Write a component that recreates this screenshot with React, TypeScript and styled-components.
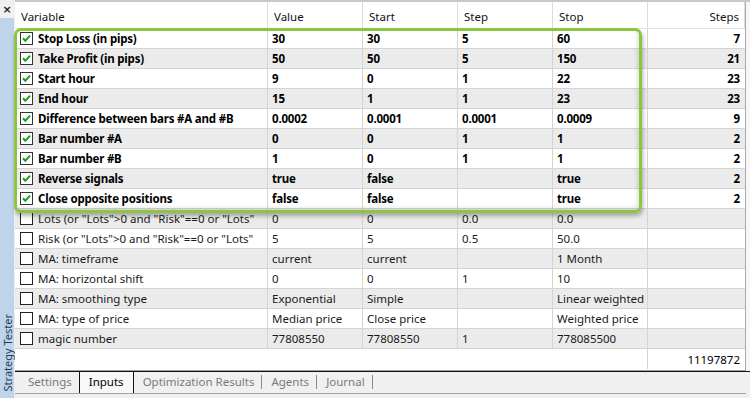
import React from "react";
import styled, { createGlobalStyle } from "styled-components";

const Global = createGlobalStyle`
  html, body { margin: 0; padding: 0; width: 750px; height: 398px; overflow: hidden; background: #f0f0f0; }
  #root { width: 750px; height: 398px; }
  * { box-sizing: border-box; }
`;

const FONT = `"Noto Sans", "Open Sans", "Liberation Sans", sans-serif`;

const Frame = styled.div`
  display: flex;
  width: 750px;
  height: 398px;
  font-family: ${FONT};
  font-size: 11.5px;
  color: #000;
`;

const Sidebar = styled.div`
  width: 15px;
  display: flex;
  flex-direction: column;
  background: #f0f0f0;
`;

const CloseBox = styled.div`
  height: 18px;
  display: flex;
  align-items: center;
  justify-content: center;
  font-family: "DejaVu Sans", sans-serif;
  font-size: 11px;
  font-weight: bold;
  color: #222;
  padding-right: 1px;
`;

const BlueStrip = styled.div`
  flex: 1;
  width: 14px;
  background: #bfd3ea;
  display: flex;
  align-items: flex-end;
  justify-content: center;
  padding-bottom: 7px;
`;

const VerticalLabel = styled.span`
  writing-mode: vertical-rl;
  transform: rotate(180deg);
  font-size: 11px;
  line-height: 13px;
  color: #1e3a5c;
  white-space: nowrap;
`;

const Main = styled.div`
  flex: 1;
  display: flex;
  flex-direction: column;
  border-top: 2px solid #c8c8c8;
  background: #f7f7f7;
  padding-right: 4px;
`;

const TablePane = styled.div`
  position: relative;
  flex: 1;
  background: #fff;
  border-right: 1px solid #a8a8a8;
  border-bottom: 1px solid #a0a0a0;
  display: grid;
  grid-template-columns: 253px 95px 95px 95px 95px 1fr;
  grid-auto-rows: 20px;
  grid-template-rows: 27px;
  align-content: start;
`;

const HeadCell = styled.div<{ $right?: boolean }>`
  display: flex;
  align-items: center;
  justify-content: ${(p) => (p.$right ? "flex-end" : "flex-start")};
  padding: 2px 5px 0 ${(p) => (p.$right ? "0" : "6px")};
  border-right: 1px solid #dcdcdc;
  border-bottom: 1px solid #e4e4e4;
  color: #111;
  white-space: nowrap;
`;

const Cell = styled.div<{ $alt: boolean; $bold: boolean; $right?: boolean; $last?: boolean }>`
  display: flex;
  align-items: center;
  justify-content: ${(p) => (p.$right ? "flex-end" : "flex-start")};
  gap: 5px;
  min-width: 0;
  padding: 0 ${(p) => (p.$right ? "5px" : "4px")} 0 ${(p) => (p.$right ? "0" : "4px")};
  background: ${(p) => (p.$alt ? "#ebebeb" : "#fff")};
  border-right: ${(p) => (p.$last ? "none" : "1px solid #d4d4d4")};
  border-bottom: 1px solid #d4d4d4;
  font-weight: ${(p) => (p.$bold ? 700 : 400)};
  letter-spacing: ${(p) => (p.$bold ? "-0.2px" : "0")};
  color: ${(p) => (p.$bold ? "#000" : "#1a1a1a")};
  white-space: nowrap;
  overflow: hidden;
`;

const NameCell = styled(Cell)`
  padding-left: 5px;
  padding-right: 0;
`;

const NameText = styled.span`
  flex: 1;
  min-width: 0;
  overflow: hidden;
  white-space: nowrap;
`;

const TotalFiller = styled.div`
  grid-column: 1 / 6;
  border-right: 1px solid #d4d4d4;
  background: #fff;
`;

const TotalCell = styled.div`
  display: flex;
  align-items: center;
  justify-content: flex-end;
  padding-right: 5px;
  background: #fff;
`;

const Highlight = styled.div`
  position: absolute;
  left: -1px;
  top: 26px;
  width: 628px;
  height: 185px;
  border: 3px solid #8cc63f;
  border-radius: 7px;
  box-shadow: 1px 3px 4px rgba(0, 0, 0, 0.3), inset -2px -2px 4px rgba(0, 0, 0, 0.12);
  pointer-events: none;
`;

const TabBar = styled.div`
  height: 27px;
  display: flex;
  align-items: stretch;
  border-top: 1px solid #111;
  padding-bottom: 4px;
  background: #f0f0f0;
  margin-right: -4px;
`;

const TabStrip = styled.div`
  flex: 1;
  display: flex;
  align-items: stretch;
  border-bottom: 1px solid #a0a0a0;
  margin-right: 4px;
`;

const Tab = styled.div<{ $active?: boolean; $first?: boolean }>`
  display: flex;
  align-items: center;
  font-size: 11.5px;
  padding: 0 ${(p) => (p.$active ? "9px" : "7px")} 2px ${(p) => (p.$first ? "13px" : p.$active ? "9px" : "9px")};
  color: ${(p) => (p.$active ? "#000" : "#7a7a7a")};
  background: ${(p) => (p.$active ? "#f8f8f8" : "transparent")};
  border-left: ${(p) => (p.$active ? "1px solid #111" : "none")};
  border-right: ${(p) => (p.$active ? "1px solid #111" : "none")};
  white-space: nowrap;
`;

const Divider = styled.div`
  width: 1px;
  align-self: center;
  height: 14px;
  margin-top: -2px;
  background: #8a8a8a;
`;

const CheckIcon: React.FC<{ checked: boolean }> = ({ checked }) => (
  <svg width="13" height="13" viewBox="0 0 13 13" style={{ flex: "none" }}>
    <rect x="0.5" y="0.5" width="12" height="12" fill="#fff" stroke={checked ? "#333" : "#222"} />
    {checked && (
      <path d="M3 6.3 L5.3 8.8 L10 3.6" fill="none" stroke="#1e9a1e" strokeWidth="2" />
    )}
  </svg>
);

type Row = { name: string; checked: boolean; vals: string[]; steps: string };

const rows: Row[] = [
  { name: "Stop Loss (in pips)", checked: true, vals: ["30", "30", "5", "60"], steps: "7" },
  { name: "Take Profit (in pips)", checked: true, vals: ["50", "50", "5", "150"], steps: "21" },
  { name: "Start hour", checked: true, vals: ["9", "0", "1", "22"], steps: "23" },
  { name: "End hour", checked: true, vals: ["15", "1", "1", "23"], steps: "23" },
  { name: "Difference between bars #A and #B", checked: true, vals: ["0.0002", "0.0001", "0.0001", "0.0009"], steps: "9" },
  { name: "Bar number #A", checked: true, vals: ["0", "0", "1", "1"], steps: "2" },
  { name: "Bar number #B", checked: true, vals: ["1", "0", "1", "1"], steps: "2" },
  { name: "Reverse signals", checked: true, vals: ["true", "false", "", "true"], steps: "2" },
  { name: "Close opposite positions", checked: true, vals: ["false", "false", "", "true"], steps: "2" },
  { name: 'Lots (or "Lots">0 and "Risk"==0 or "Lots"', checked: false, vals: ["0", "0", "0.0", "0.0"], steps: "" },
  { name: 'Risk (or "Lots">0 and "Risk"==0 or "Lots"', checked: false, vals: ["5", "5", "0.5", "50.0"], steps: "" },
  { name: "MA: timeframe", checked: false, vals: ["current", "current", "", "1 Month"], steps: "" },
  { name: "MA: horizontal shift", checked: false, vals: ["0", "0", "1", "10"], steps: "" },
  { name: "MA: smoothing type", checked: false, vals: ["Exponential", "Simple", "", "Linear weighted"], steps: "" },
  { name: "MA: type of price", checked: false, vals: ["Median price", "Close price", "", "Weighted price"], steps: "" },
  { name: "magic number", checked: false, vals: ["77808550", "77808550", "1", "778085500"], steps: "" },
];

export default function App() {
  return (
    <>
      <Global />
      <Frame>
        <Sidebar>
          <CloseBox>×</CloseBox>
          <BlueStrip>
            <VerticalLabel>Strategy Tester</VerticalLabel>
          </BlueStrip>
        </Sidebar>
        <Main>
          <TablePane>
            <HeadCell>Variable</HeadCell>
            <HeadCell>Value</HeadCell>
            <HeadCell>Start</HeadCell>
            <HeadCell>Step</HeadCell>
            <HeadCell>Stop</HeadCell>
            <HeadCell $right>Steps</HeadCell>
            {rows.map((r, i) => {
              const alt = i % 2 === 1;
              return (
                <React.Fragment key={r.name}>
                  <NameCell $alt={alt} $bold={r.checked}>
                    <CheckIcon checked={r.checked} />
                    <NameText>{r.name}</NameText>
                  </NameCell>
                  {r.vals.map((v, j) => (
                    <Cell key={j} $alt={alt} $bold={r.checked}>
                      {v}
                    </Cell>
                  ))}
                  <Cell $alt={alt} $bold={r.checked} $right $last>
                    {r.steps}
                  </Cell>
                </React.Fragment>
              );
            })}
            <TotalFiller />
            <TotalCell>11197872</TotalCell>
            <Highlight />
          </TablePane>
          <TabBar>
            <TabStrip>
              <Tab $first>Settings</Tab>
              <Tab $active>Inputs</Tab>
              <Tab>Optimization Results</Tab>
              <Divider />
              <Tab>Agents</Tab>
              <Divider />
              <Tab>Journal</Tab>
              <Divider />
            </TabStrip>
          </TabBar>
        </Main>
      </Frame>
    </>
  );
}
